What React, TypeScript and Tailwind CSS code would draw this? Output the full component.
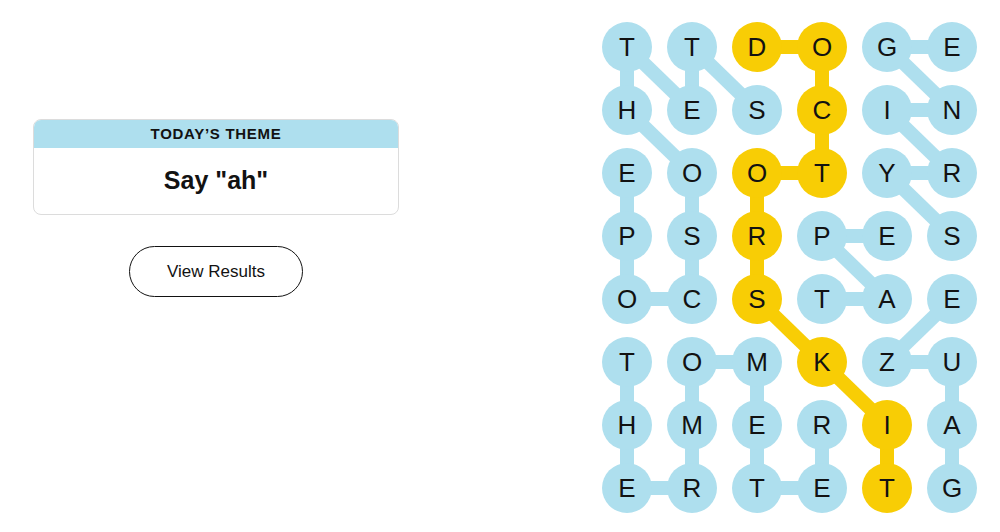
import React from "react";

const BLUE = "#aedfee";
const GOLD = "#f8cd05";

const LETTERS = [
  "TTDOGE",
  "HESCIN",
  "EOOTYR",
  "PSRPES",
  "OCSTAE",
  "TOMKZU",
  "HMERIA",
  "ERTETG",
];

type Cell = [number, number];

// Found words, each as a path of [row, col] cells
const WORDS: { path: Cell[]; span?: boolean }[] = [
  { path: [[1, 2], [0, 1], [1, 1], [0, 0], [1, 0], [2, 1], [3, 1], [4, 1], [4, 0], [3, 0], [2, 0]] },
  { path: [[3, 5], [2, 4], [2, 5], [1, 4], [1, 5], [0, 4], [0, 5]] },
  { path: [[7, 5], [6, 5], [5, 5], [5, 4], [4, 5]] },
  { path: [[4, 3], [4, 4], [3, 3], [3, 4]] },
  { path: [[5, 0], [6, 0], [7, 0], [7, 1], [6, 1], [5, 1], [5, 2], [6, 2], [7, 2], [7, 3], [6, 3]] },
  { path: [[0, 2], [0, 3], [1, 3], [2, 3], [2, 2], [3, 2], [4, 2], [5, 3], [6, 4], [7, 4]], span: true },
];

const COL = 65;
const ROW = 63;
const R = 25;

const spanCells = new Set(
  WORDS.filter((w) => w.span).flatMap((w) => w.path.map(([r, c]) => `${r}-${c}`))
);

function Board() {
  const width = COL * 5 + R * 2;
  const height = ROW * 7 + R * 2;
  return (
    <div className="relative" style={{ width, height }}>
      <svg className="absolute inset-0" width={width} height={height}>
        {WORDS.map((w, i) =>
          w.path.slice(1).map(([r, c], j) => {
            const [pr, pc] = w.path[j];
            return (
              <line
                key={`${i}-${j}`}
                x1={R + pc * COL}
                y1={R + pr * ROW}
                x2={R + c * COL}
                y2={R + r * ROW}
                stroke={w.span ? GOLD : BLUE}
                strokeWidth={14}
              />
            );
          })
        )}
      </svg>
      <div className="relative grid grid-cols-[repeat(6,50px)] gap-x-[15px] gap-y-[13px]">
        {LETTERS.flatMap((row, r) =>
          row.split("").map((ch, c) => (
            <div
              key={`${r}-${c}`}
              className={`flex h-[50px] w-[50px] items-center justify-center rounded-full text-[26px] leading-none text-[#121212] ${
                spanCells.has(`${r}-${c}`) ? "bg-[#f8cd05]" : "bg-[#aedfee]"
              }`}
            >
              {ch}
            </div>
          ))
        )}
      </div>
    </div>
  );
}

export default function App() {
  return (
    <div className="flex h-[532px] w-[1000px] bg-white font-['Liberation_Sans',Arial,sans-serif] text-[#121212]">
      <div className="flex w-[399px] shrink-0 flex-col items-center pl-[33px] pt-[119px]">
        <div className="w-[366px] overflow-hidden rounded-[8px] border border-[#dcdcdc]">
          <div className="flex h-[28px] items-center justify-center bg-[#aedfee] text-[15px] font-bold tracking-[0.7px]">
            TODAY’S THEME
          </div>
          <div className="flex h-[66px] items-center justify-center text-[25px] font-bold">
            Say "ah"
          </div>
        </div>
        <button className="mt-[31px] flex h-[51px] w-[174px] items-center justify-center rounded-full border border-[#121212] bg-white text-[17px]">
          View Results
        </button>
      </div>
      <div className="ml-[203px] pt-[22px]">
        <Board />
      </div>
    </div>
  );
}
